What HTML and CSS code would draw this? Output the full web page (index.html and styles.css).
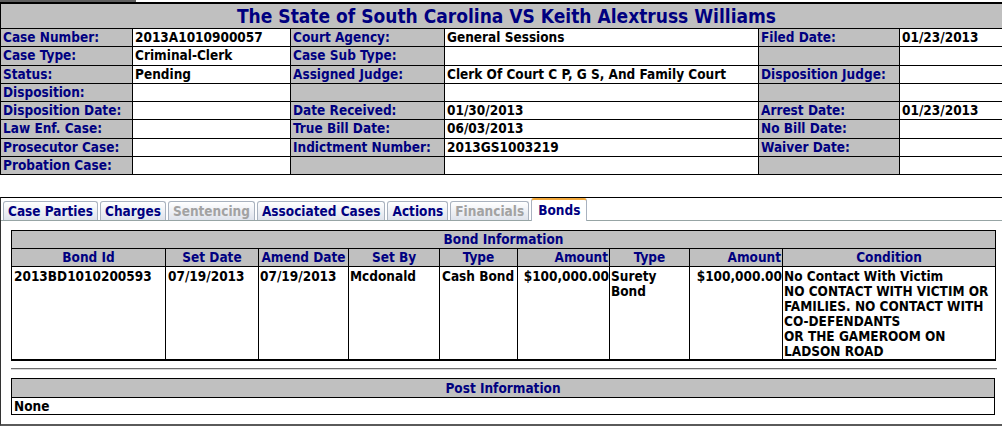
FILE: index.html
```html
<!DOCTYPE html>
<html>
<head>
<meta charset="utf-8">
<title>Case Details</title>
<link rel="stylesheet" href="styles.css">
</head>
<body>
<div class="topstrip"></div>
<table class="case">
  <colgroup>
    <col class="c1"><col class="c2"><col class="c3"><col class="c4"><col class="c5"><col class="c6">
  </colgroup>
  <tr><th colspan="6" class="title">The State of South Carolina VS Keith Alextruss Williams</th></tr>
  <tr><td class="lbl">Case Number:</td><td class="val">2013A1010900057</td><td class="lbl">Court Agency:</td><td class="val">General Sessions</td><td class="lbl">Filed Date:</td><td class="val">01/23/2013</td></tr>
  <tr><td class="lbl">Case Type:</td><td class="val">Criminal-Clerk</td><td class="lbl">Case Sub Type:</td><td class="val"></td><td class="lbl"></td><td class="val"></td></tr>
  <tr><td class="lbl">Status:</td><td class="val">Pending</td><td class="lbl">Assigned Judge:</td><td class="val">Clerk Of Court C P, G S, And Family Court</td><td class="lbl">Disposition Judge:</td><td class="val"></td></tr>
  <tr><td class="lbl">Disposition:</td><td class="val"></td><td class="lbl"></td><td class="val"></td><td class="lbl"></td><td class="val"></td></tr>
  <tr><td class="lbl">Disposition Date:</td><td class="val"></td><td class="lbl">Date Received:</td><td class="val">01/30/2013</td><td class="lbl">Arrest Date:</td><td class="val">01/23/2013</td></tr>
  <tr><td class="lbl">Law Enf. Case:</td><td class="val"></td><td class="lbl">True Bill Date:</td><td class="val">06/03/2013</td><td class="lbl">No Bill Date:</td><td class="val"></td></tr>
  <tr><td class="lbl">Prosecutor Case:</td><td class="val"></td><td class="lbl">Indictment Number:</td><td class="val">2013GS1003219</td><td class="lbl">Waiver Date:</td><td class="val"></td></tr>
  <tr><td class="lbl">Probation Case:</td><td class="val"></td><td class="lbl"></td><td class="val"></td><td class="lbl"></td><td class="val"></td></tr>
</table>

<div class="tabbox">
  <div class="tabnav">
    <span class="tab">Case Parties</span>
    <span class="tab">Charges</span>
    <span class="tab disabled">Sentencing</span>
    <span class="tab">Associated Cases</span>
    <span class="tab">Actions</span>
    <span class="tab disabled">Financials</span>
    <span class="tab active">Bonds</span>
  </div>
  <div class="panel">
    <table class="grid bond">
      <colgroup>
        <col class="b1"><col class="b2"><col class="b3"><col class="b4"><col class="b5"><col class="b6"><col class="b7"><col class="b8"><col class="b9">
      </colgroup>
      <tr><th colspan="9">Bond Information</th></tr>
      <tr>
        <th>Bond Id</th><th>Set Date</th><th>Amend Date</th><th>Set By</th><th>Type</th><th class="r">Amount</th><th>Type</th><th class="r">Amount</th><th>Condition</th>
      </tr>
      <tr class="data">
        <td>2013BD1010200593</td><td>07/19/2013</td><td class="tight">07/19/2013</td><td class="tight">Mcdonald</td><td>Cash Bond</td><td class="r">$100,000.00</td><td class="wrap tight">Surety Bond</td><td class="r">$100,000.00</td><td class="tight">No Contact With Victim<br>NO CONTACT WITH VICTIM OR<br>FAMILIES. NO CONTACT WITH<br>CO-DEFENDANTS<br>OR THE GAMEROOM ON<br>LADSON ROAD</td>
      </tr>
    </table>
    <hr class="sep">
    <table class="grid post">
      <tr><th>Post Information</th></tr>
      <tr><td>None</td></tr>
    </table>
  </div>
</div>
</body>
</html>
```

FILE: styles.css
```css
html, body {
  margin: 0;
  padding: 0;
  background: #ffffff;
  overflow: hidden;
}
body {
  font-family: "DejaVu Sans Condensed", "DejaVu Sans", sans-serif;
  font-size: 13.5px;
  font-weight: bold;
  color: #000;
  width: 1002px;
}
.topstrip {
  width: 136px;
  height: 2px;
  background: #5f5f5f;
}

/* Case header table */
.case {
  border-collapse: collapse;
  table-layout: fixed;
  width: 1012px;
  border-top: 2px solid #000;
  border-left: 1px solid #000;
}
.case .c1 { width: 132px; }
.case .c2 { width: 158px; }
.case .c3 { width: 154px; }
.case .c4 { width: 314px; }
.case .c5 { width: 141px; }
.case .c6 { width: 113px; }
.case th.title {
  background: #c0c0c0;
  color: #000080;
  font-size: 19px;
  height: 24px;
  padding: 0;
  text-align: center;
  vertical-align: middle;
  border: 1px solid #000;
  border-top: none;
}
.case td {
  border: 1px solid #000;
  height: 17.25px;
  padding: 0 2px;
  line-height: 15px;
  white-space: nowrap;
  overflow: hidden;
  vertical-align: middle;
}
.case td.lbl {
  background: #c0c0c0;
  color: #000080;
}
.case td.val {
  background: #fff;
  color: #000;
}

/* Tabs */
.tabbox {
  margin-top: 22px;
  width: 1006px;
  border-top: 1px solid #000;
  border-left: 1px solid #333;
  border-bottom: 2px solid #5a5a5a;
  padding-bottom: 9px;
}
.tabnav {
  display: flex;
  align-items: flex-end;
  gap: 2px;
  height: 22px;
  padding-left: 2px;
  border-bottom: 1px solid #97a5a5;
}
.tab {
  display: block;
  height: 18px;
  line-height: 18px;
  padding: 0 4px;
  color: #000080;
  border: 1px solid #a9b2bf;
  border-bottom: none;
  border-radius: 3px 3px 0 0;
  background: linear-gradient(#ffffff, #dfe3ec);
  white-space: nowrap;
}
.tab.disabled {
  color: #a2a2a2;
}
.tab.active {
  height: 20px;
  line-height: 21px;
  margin-bottom: -1px;
  padding-bottom: 1px;
  background: #ffffff;
  border-color: #a9b2bf;
  border-top: 2px solid #f2a83a;
  padding-left: 6px;
  padding-right: 6px;
}

/* Panel content */
.panel {
  padding: 9px 10px 0 10px;
}
.grid {
  border-collapse: collapse;
  width: 984px;
}
.grid th,
.grid td {
  border: 1px solid #000;
  padding: 0 1px;
  line-height: 15px;
  white-space: nowrap;
}
.grid th {
  background: #c0c0c0;
  color: #000080;
  height: 17px;
  text-align: center;
  vertical-align: middle;
}
.grid td {
  vertical-align: top;
  text-align: left;
}
.grid .r {
  text-align: right;
}
.bond {
  table-layout: fixed;
  border-bottom: 2px solid #000;
}
.bond .b1 { width: 154px; }
.bond .b2 { width: 93px; }
.bond .b3 { width: 90px; }
.bond .b4 { width: 91px; }
.bond .b5 { width: 78px; }
.bond .b6 { width: 92px; }
.bond .b7 { width: 80px; }
.bond .b8 { width: 93px; }
.bond .b9 { width: 213px; }
.bond tr.data td {
  padding: 2px 2px 0 2px;
  overflow: hidden;
}
.bond tr.data td.tight {
  padding-left: 1px;
}
.bond tr.data td.r {
  padding-right: 0;
}
.bond tr.data td.wrap {
  white-space: normal;
}
.sep {
  margin: 7px 0 8px 0;
  border: none;
  border-top: 1px solid #6e6e6e;
  border-bottom: 1px solid #d8d8d8;
  height: 0;
}
.post th {
  height: 18px;
}
.post td {
  height: 16px;
  padding: 0 2px;
  vertical-align: middle;
}
```
